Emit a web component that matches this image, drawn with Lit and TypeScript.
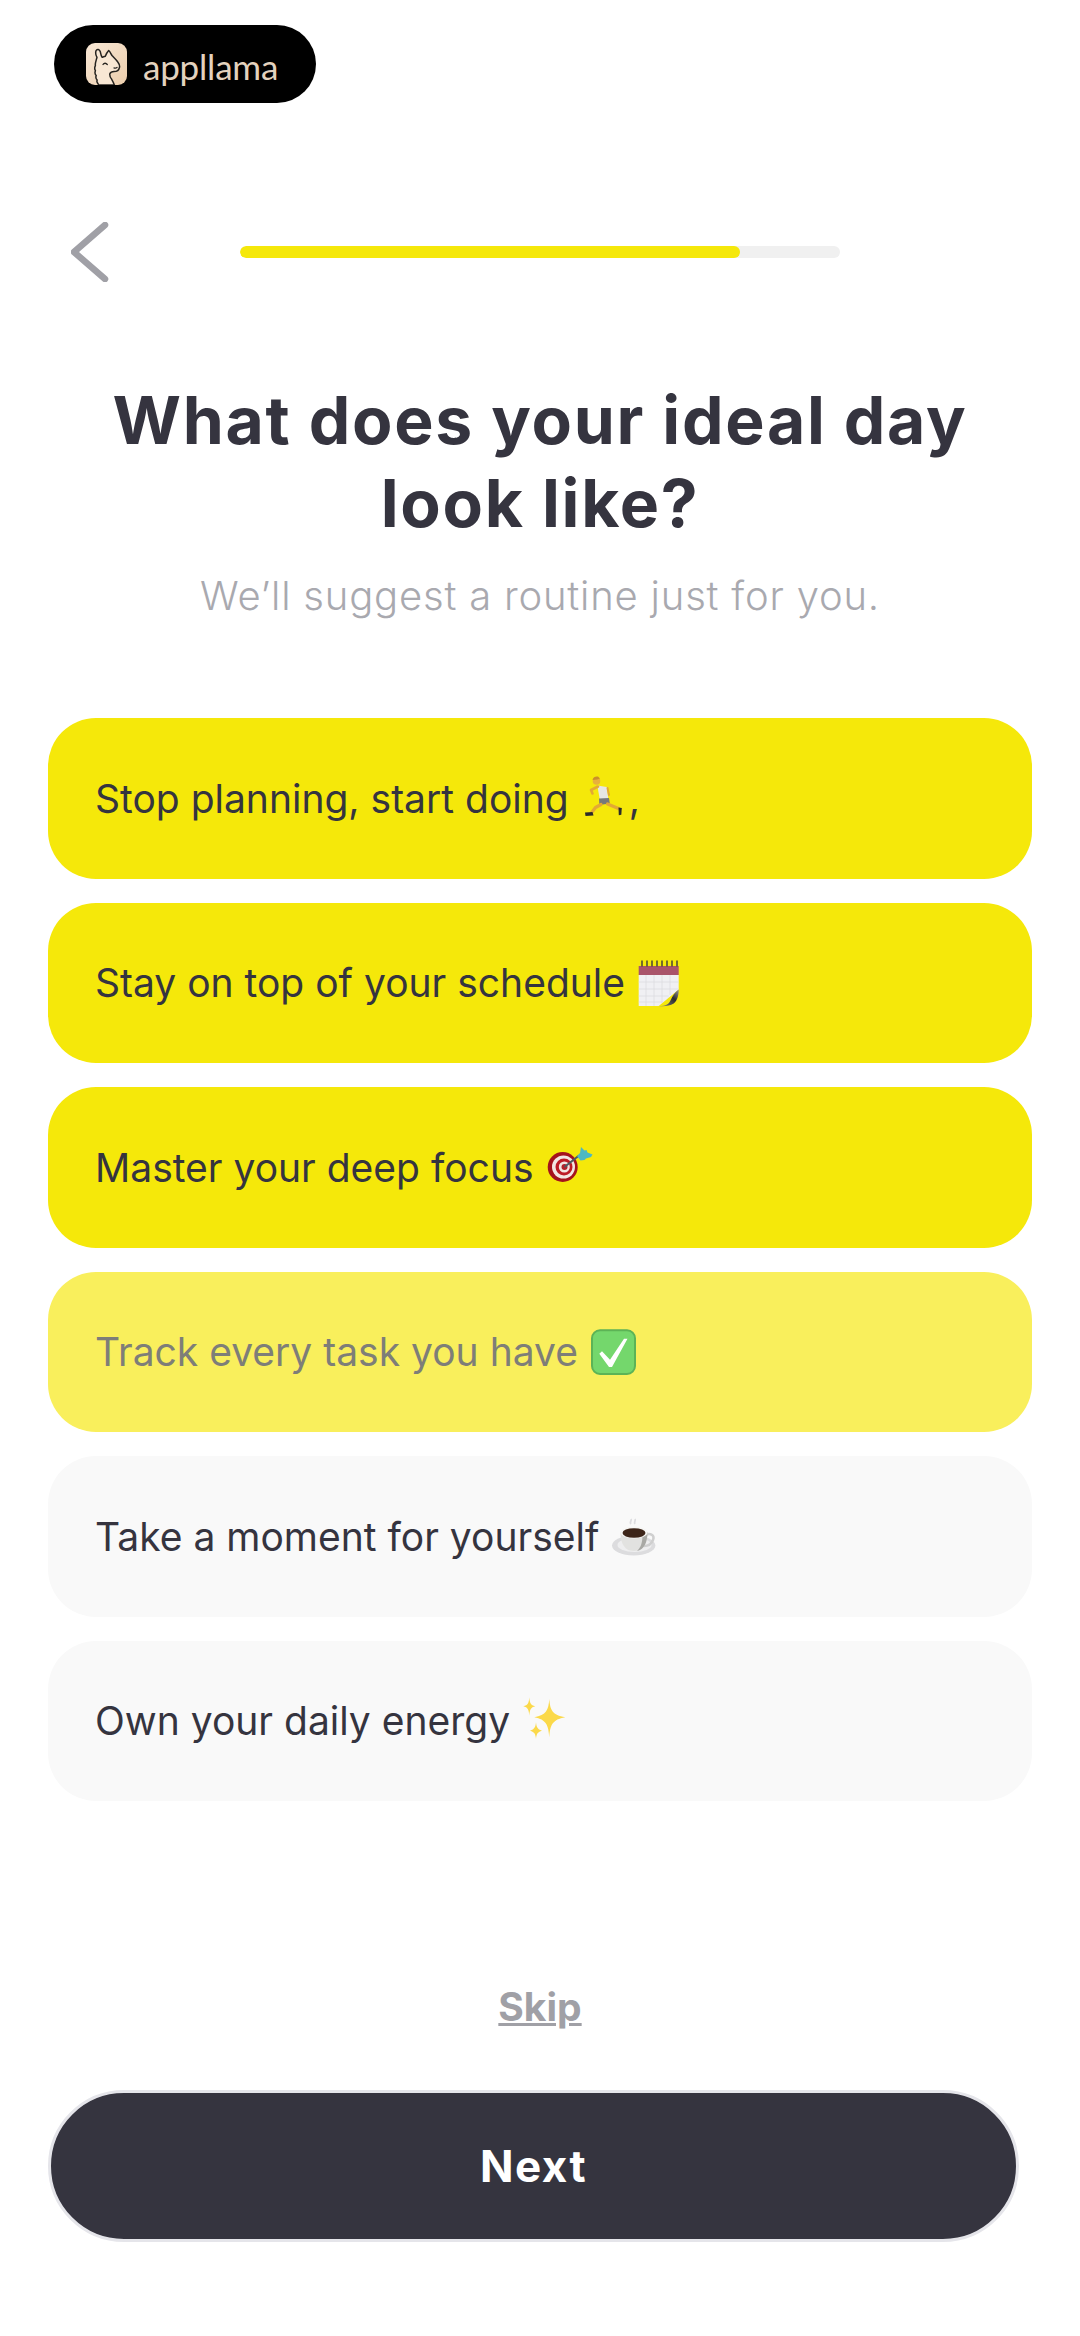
import {LitElement, html, css, svg} from 'lit';
import {customElement} from 'lit/decorators.js';

const PROGRESS = 83.3;

// emoji, all on a 48x48 box
const runner = svg`
  <path d="M16.300 11.500l9.500 1.500 1.500 12-8.500.5z" fill="#e6e6e4"/>
  <path d="M18 24.500l10-.5.800 5.500-10.500 1.500z" fill="#77787a"/>
  <path d="M17 12.500l-7 3.500 1.500 3.500" fill="none" stroke="#e3a935" stroke-width="2.600" stroke-linecap="round" stroke-linejoin="round"/>
  <path d="M26.500 14l1.500 7" fill="none" stroke="#e3a935" stroke-width="2" stroke-linecap="round"/>
  <path d="M20 30.500l-5.500 3-3.800 5" fill="none" stroke="#e3a935" stroke-width="3.200" stroke-linecap="round" stroke-linejoin="round"/>
  <path d="M26.500 30l11 4.500" fill="none" stroke="#e3a935" stroke-width="3.200" stroke-linecap="round"/>
  <circle cx="15.500" cy="7" r="3.800" fill="#e8b03c"/>
  <path d="M11.500 6c.5-3 3-4 5.500-3.500l2 2-3 1z" fill="#c98f2c"/>
  <path d="M4 38.500l7.500-.5 1 3.500-8 .5z" fill="#2a2a2a"/>
  <path d="M37.500 33.500l3.300.5-.5 6.700-2.500.5z" fill="#2a2a2a"/>`;

const calendar = svg`
  <defs>
    <linearGradient id="curl" x1="0" y1="1" x2="1" y2="0">
      <stop offset="0" stop-color="#8c8c8c"/><stop offset=".6" stop-color="#2c2c2c"/><stop offset="1" stop-color="#9a9a9a"/>
    </linearGradient>
  </defs>
  <path d="M1.700 16h40v14.500L21.700 47h-20z" fill="#f0f0f3"/>
  <rect x="1.700" y="7" width="40" height="9" fill="#a9546a"/>
  <path d="M5 1.500v6M10 1.500v6M15 1.500v6M20 1.500v6M25 1.500v6M30 1.500v6M35 1.500v6M40 1.500v6" stroke="#4a4634" stroke-width="1.500"/>
  <path d="M1.700 23h40M1.700 30h40M1.700 37h30M1.700 43h24M9 16v31M17 16v31M25 16v28M33 16v20" stroke="#dcdce0" stroke-width=".8"/>
  <path d="M21.700 47c8 0 10-2 12-6s4-8 8-10.500c0 5-1 11-5 14-4 2.500-9 3-15 2.500z" fill="url(#curl)"/>`;

const target = svg`
  <circle cx="16.700" cy="24" r="15" fill="#a5121c"/>
  <ellipse cx="17.500" cy="24" rx="11.500" ry="11.500" fill="#f2e6e2"/>
  <ellipse cx="18" cy="24" rx="8.500" ry="8.500" fill="#bd1b26"/>
  <ellipse cx="18.300" cy="24" rx="5.500" ry="5.500" fill="#f2e6e2"/>
  <circle cx="18.500" cy="24" r="3" fill="#b3222b"/>
  <path d="M18.500 24L33 12.500" stroke="#4d5a60" stroke-width="2"/>
  <path d="M31 13l3-3 1-6 3.500 3.500 2-.5 1 2.500 5 2-1.500 2.500-5 1.500-1.500 1.500-4 .5z" fill="#4cb8c4"/>`;

const check = svg`
  <rect x="2" y="2.300" width="43" height="43.700" rx="8" fill="#74d76c" stroke="#5cb356" stroke-width="2"/>
  <path d="M9.300 25.700l2.700-2.500 8 8.500L34 10.700h3.500L22 39h-3z" fill="#fff"/>`;

const coffee = svg`
  <ellipse cx="22.700" cy="33.500" rx="21.700" ry="10" fill="#dcdcde"/>
  <ellipse cx="23.500" cy="33" rx="17" ry="7" fill="#eeeeef"/>
  <path d="M33 24c6-4 11-1 9 4s-6 6-9 6" fill="none" stroke="#cfcfcf" stroke-width="2.500"/>
  <path d="M9.500 20c0 8 2 19 13.500 19s13.500-11 13.500-19z" fill="#e2e2e0"/>
  <path d="M26 39c7-1 10.500-9 10.500-19l-5 3c0 8-2 13-5.500 16z" fill="#a9a9a5"/>
  <ellipse cx="23" cy="20.500" rx="13.500" ry="6" fill="#f6f6f4"/>
  <ellipse cx="23" cy="21" rx="11.500" ry="4.800" fill="#3d2519"/>
  <path d="M20 12c-2-2 1-3 0-5M24 12c-1.500-2 1-3 0-5" fill="none" stroke="#dddde0" stroke-width="1.800"/>`;

const sparkles = svg`
  <path d="M27.300 2c.8 11 3 16 16 18.300-13 2.200-15.200 8-16 20-.8-12-3-17.800-15-20 12-2.300 14.200-7.300 15-18.300z" fill="#fbd94a"/>
  <path d="M7.300.3c.4 5.500 1.300 8 6 9-4.700 1-5.600 3.600-6 9.400-.4-5.800-1.300-8.400-6-9.400 4.700-1 5.600-3.500 6-9z" fill="#fbd94a"/>
  <path d="M14 25.300c.4 4.500 1.300 7 6 8.400-4.700 1.200-5.600 3.500-6 8.300-.4-4.800-1.300-7.100-6-8.300 4.700-1.400 5.600-3.900 6-8.400z" fill="#fbd94a"/>`;

const OPTIONS = [
  {label: 'Stop planning, start doing', icon: runner, after: ',', state: 'on'},
  {label: 'Stay on top of your schedule', icon: calendar, after: '', state: 'on'},
  {label: 'Master your deep focus', icon: target, after: '', state: 'on'},
  {label: 'Track every task you have', icon: check, after: '', state: 'fading'},
  {label: 'Take a moment for yourself', icon: coffee, after: '', state: ''},
  {label: 'Own your daily energy', icon: sparkles, after: '', state: ''},
];

@customElement('app-root')
export class AppRoot extends LitElement {
  static styles = css`
    :host {
      display: block;
      width: 1080px;
      height: 2336px;
      background: #fff;
      font-family: Inter, "Liberation Sans", sans-serif;
      color: #35343f;
      overflow: hidden;
    }
    .page {
      display: flex;
      flex-direction: column;
      height: 100%;
      box-sizing: border-box;
      padding: 25px 48px 0;
    }
    .badge {
      display: flex;
      align-items: center;
      gap: 16px;
      align-self: flex-start;
      box-sizing: border-box;
      width: 262px;
      height: 78px;
      margin-left: 6px;
      padding-left: 32px;
      border-radius: 39px;
      background: #000;
    }
    .badge svg { width: 41px; height: 42px; margin-top: -1px; }
    .wordmark {
      padding-top: 4px;
      font-family: Lato, sans-serif;
      font-size: 35px;
      font-weight: 400;
      line-height: 1;
      letter-spacing: -.2px;
      color: #e3d2be;
    }
    .top {
      display: flex;
      align-items: center;
      height: 60px;
      margin-top: 119px;
    }
    .back { width: 40px; height: 60px; margin-left: 23px; }
    .track {
      width: 600px;
      height: 12px;
      margin-left: 129px;
      border-radius: 6px;
      background: #f0f0f0;
      overflow: hidden;
    }
    .fill { height: 100%; border-radius: 6px; background: #f5e80a; }
    h1 {
      margin: 97px 0 0;
      font-size: 66px;
      line-height: 83px;
      font-weight: 700;
      letter-spacing: 1.7px;
      text-align: center;
    }
    .sub {
      margin: 26px 0 0;
      font-size: 40px;
      line-height: 50px;
      font-weight: 300;
      letter-spacing: .8px;
      text-align: center;
      color: #a9a9af;
    }
    .options {
      display: flex;
      flex-direction: column;
      gap: 24px;
      margin-top: 97px;
    }
    .option {
      display: flex;
      align-items: center;
      height: 160.5px;
      padding: 0 47px;
      border-radius: 48px;
      background: #f9f9f9;
      font-size: 39px;
      font-weight: 400;
    }
    .option.on { background: #f5e80a; }
    .option.fading { background: #f9ef5c; }
    .option.fading .label { color: #7e7e78; }
    .option svg { width: 48px; height: 48px; margin-left: 12px; }
    .skip {
      margin: 183px 0 0;
      font-size: 39px;
      line-height: 46px;
      font-weight: 700;
      text-align: center;
      text-decoration: underline;
      color: #a0a0a6;
    }
    .next {
      display: block;
      box-sizing: border-box;
      width: 971px;
      height: 152px;
      margin: 60px 0 0;
      border: 3px solid #e5e5ea;
      border-radius: 76px;
      background: #35343f;
      color: #fff;
      font: 700 44px Inter, "Liberation Sans", sans-serif;
      letter-spacing: 1.5px;
    }
  `;

  render() {
    return html`
      <div class="page">
        <div class="badge">
          <svg viewBox="0 0 41 42">
            <defs>
              <linearGradient id="tile" x1="0" y1="0" x2="1" y2="1">
                <stop offset="0" stop-color="#f9e8d6"/><stop offset="1" stop-color="#ebcdac"/>
              </linearGradient>
              <clipPath id="tileclip"><rect width="41" height="42" rx="9"/></clipPath>
            </defs>
            <g clip-path="url(#tileclip)">
              <rect width="41" height="42" fill="url(#tile)"/>
              <path d="M12.700 42c-1-2.500-2.700-3-1.500-5-2-1.500-1.500-3-1-4.500-1.500-1.500-1.500-3-.8-4.800-1-1.700-.8-3.500 0-5-.5-2 .5-4.500 1.600-8.400-1.200-2-1.800-4-1-6.500 1-2.300 3.600-1.500 4.300 1 .5 1.800.7 3.700 1.700 5.400 1-.3 2.300-.6 3.300-1 .8-2 1.800-4 3.400-5.700 1.500 1.300 2 3 3.300 5 1.500 1.800 3.800 3.500 5.800 6.500 1.300 1.800 2.200 3.500 1.700 5.300-.6 3-3 4.300-5.500 4.300-1.700 0-3.500.8-4.300 2.400 0 2 .7 4 2 5.300.9 1.500 1.800 3.300 2.700 5.800z" fill="#f8e7d4" stroke="#26231f" stroke-width="1.500" stroke-linejoin="round"/>
              <path d="M17 21.500c1-1.700 3-1.700 4.300 0M31 24.500c-1 .8-2 .8-3 .4" fill="none" stroke="#26231f" stroke-width="1.300" stroke-linecap="round"/>
            </g>
          </svg>
          <span class="wordmark">appllama</span>
        </div>
        <div class="top">
          <svg class="back" viewBox="0 0 40 60">
            <path d="M34 3L3 30l31 27" fill="none" stroke="#a0a0a6" stroke-width="6.500" stroke-linecap="round" stroke-linejoin="round"/>
          </svg>
          <div class="track"><div class="fill" style="width: ${PROGRESS}%"></div></div>
        </div>
        <h1>What does your ideal day<br>look like?</h1>
        <p class="sub">We’ll suggest a routine just for you.</p>
        <div class="options">
          ${OPTIONS.map(o => html`
            <div class="option ${o.state}">
              <span class="label">${o.label}</span>
              <svg viewBox="0 0 48 48">${o.icon}</svg>
              ${o.after ? html`<span class="label">${o.after}</span>` : ''}
            </div>
          `)}
        </div>
        <p class="skip">Skip</p>
        <button class="next">Next</button>
      </div>
    `;
  }
}
